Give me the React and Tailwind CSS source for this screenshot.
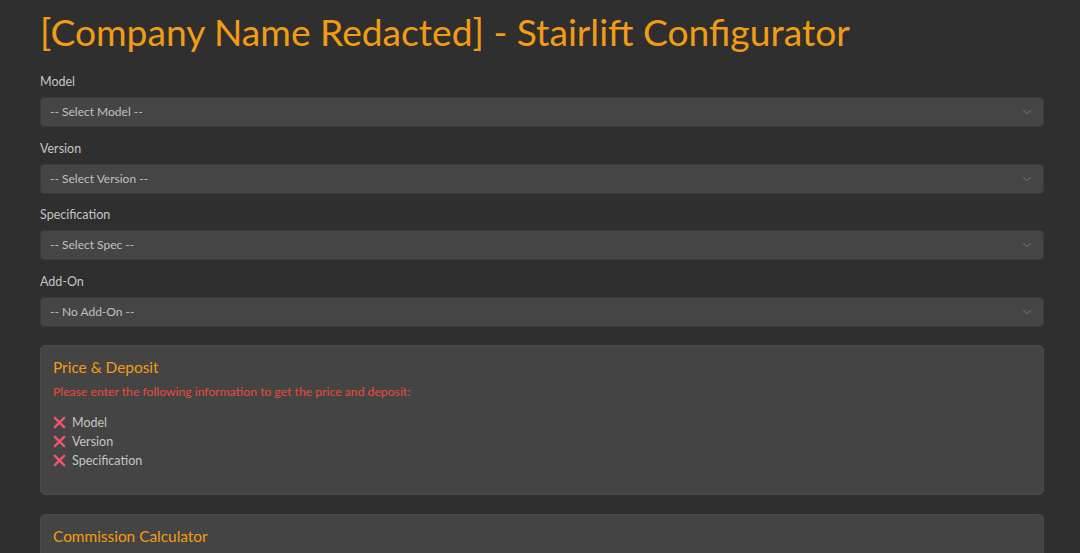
import { ChevronDown } from 'lucide-react';

const fields = [
  { label: 'Model', placeholder: '-- Select Model --' },
  { label: 'Version', placeholder: '-- Select Version --' },
  { label: 'Specification', placeholder: '-- Select Spec --' },
  { label: 'Add-On', placeholder: '-- No Add-On --' },
];

const missing = ['Model', 'Version', 'Specification'];

function Cross() {
  return (
    <svg viewBox="0 0 14 14" className="h-[13px] w-[13px] shrink-0">
      <path d="M2 2L12 12M12 2L2 12" stroke="#f0546f" strokeWidth={2.6} strokeLinecap="round" />
    </svg>
  );
}

function SelectField({ label, placeholder }) {
  return (
    <div className="mb-[11.7px]">
      <label className="block text-[12.5px] leading-[20px] text-[#c4c4c4] mb-[5px]">{label}</label>
      <div className="flex h-[30px] items-center justify-between rounded-[4px] border border-[#3b3b3b] bg-[#454545] pl-[9px] pr-[9px]">
        <span className="text-[12px] text-[#c0c0c0]">{placeholder}</span>
        <ChevronDown className="h-[14px] w-[14px] text-[#777777]" strokeWidth={1.7} />
      </div>
    </div>
  );
}

export default function App() {
  return (
    <div
      className="min-h-screen bg-[#2f2f2f] pl-10 pr-9 pt-[10px]"
      style={{ fontFamily: 'Lato, "Noto Sans", sans-serif' }}
    >
      <h1 className="text-[37.2px] leading-[44px] text-[#f39c12] mb-[18px]">
        [Company Name Redacted] - Stairlift Configurator
      </h1>

      {fields.map((f) => (
        <SelectField key={f.label} {...f} />
      ))}

      <div className="mt-[18px] rounded-[5px] border border-[#4a4a4a] bg-[#444444] px-[12px] pt-[10px] pb-[24px]">
        <h2 className="text-[15.4px] leading-[22px] text-[#f39c12]">Price &amp; Deposit</h2>
        <p className="mt-[4px] text-[12.2px] leading-[20px] text-[#e74c3c]">
          Please enter the following information to get the price and deposit:
        </p>
        <ul className="mt-[11px]">
          {missing.map((m) => (
            <li key={m} className="flex items-center gap-[6px] text-[12.5px] leading-[19px] text-[#c4c4c4]">
              <Cross />
              {m}
            </li>
          ))}
        </ul>
      </div>

      <div className="mt-[19px] rounded-[5px] border border-[#4a4a4a] bg-[#444444] px-[12px] pt-[10px] pb-[40px]">
        <h2 className="text-[15.4px] leading-[22px] text-[#f39c12]">Commission Calculator</h2>
      </div>
    </div>
  );
}
